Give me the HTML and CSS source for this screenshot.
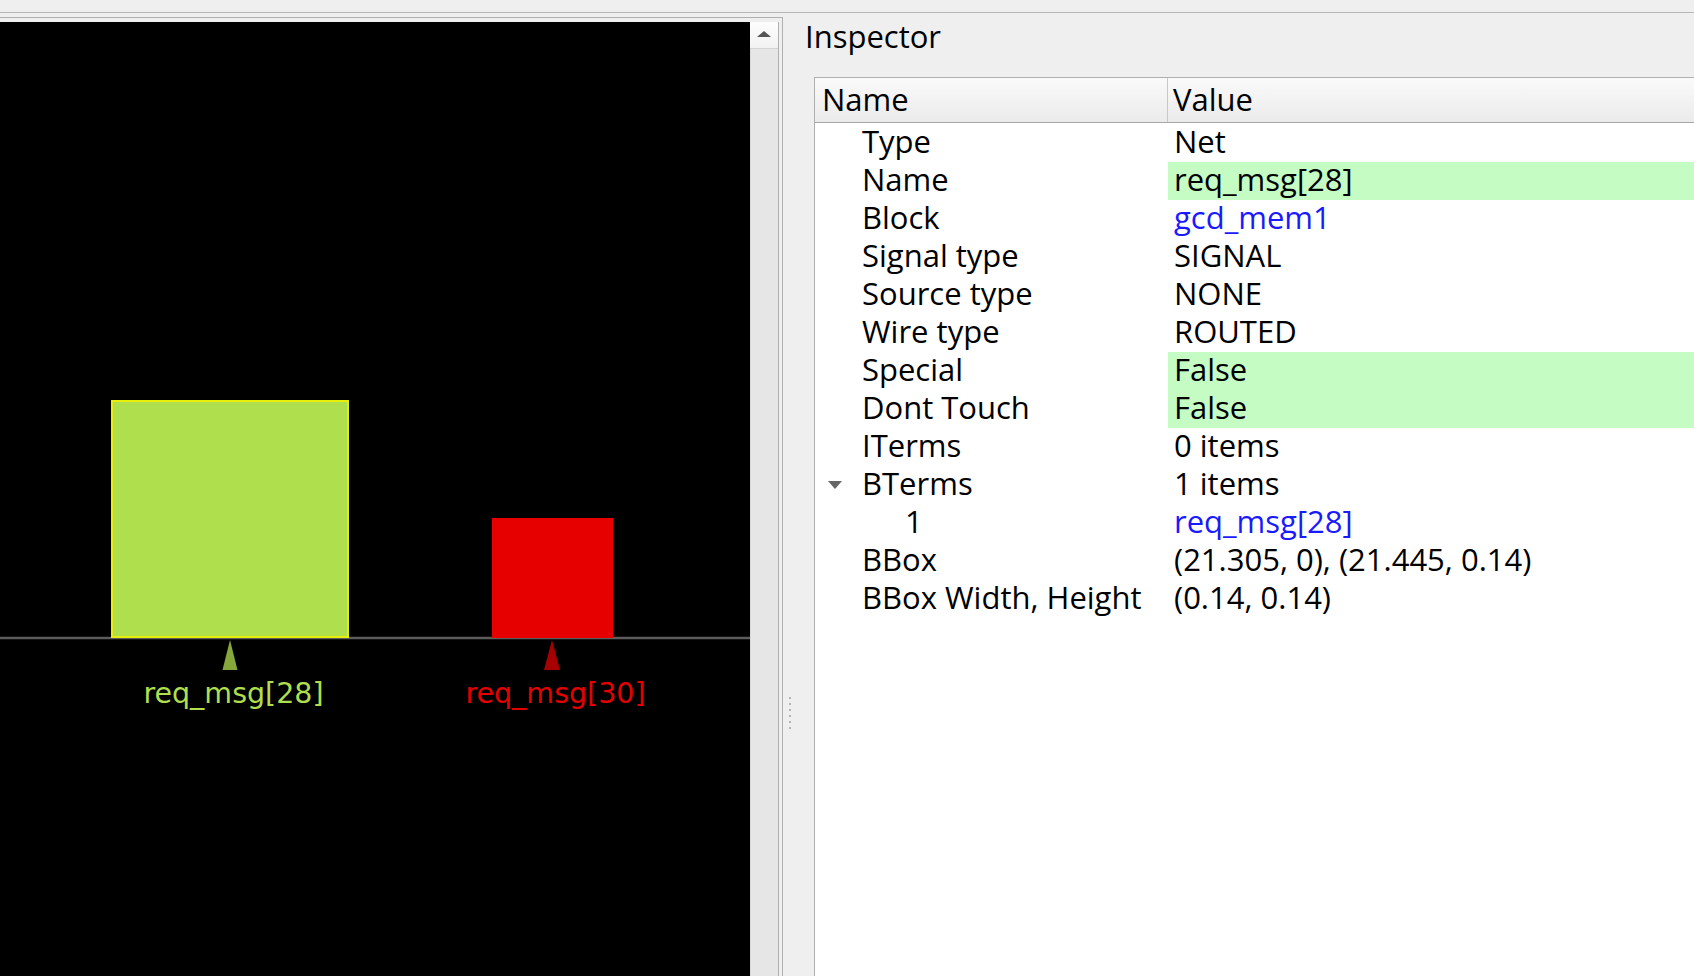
FILE: index.html
```html
<!DOCTYPE html>
<html>
<head>
<meta charset="utf-8">
<title>Inspector</title>
<link rel="stylesheet" href="styles.css">
</head>
<body>
<div class="app">
  <div class="topbar"></div>
  <div class="main">
    <div class="left-dock">
      <div class="view">
        <div class="canvas">
          <svg class="layout" width="750" height="954" viewBox="0 22 750 954" xmlns="http://www.w3.org/2000/svg">
            <line x1="0" y1="638" x2="750" y2="638" stroke="#5c5c5c" stroke-width="2.5"/>
            <rect x="112" y="401" width="236" height="236" fill="#b0df4e" stroke="#e6ef0a" stroke-width="2"/>
            <rect x="492" y="518" width="121" height="120" fill="#e60000"/>
            <polygon points="230,640 237.5,670 222.5,670" fill="#86a73a"/>
            <polygon points="552,640 560,670 544,670" fill="#a80000"/>
            <text class="pin-label" x="233.5" y="703" text-anchor="middle" fill="#b0df4e">req_msg[28]</text>
            <text class="pin-label" x="555.5" y="703" text-anchor="middle" fill="#e60000">req_msg[30]</text>
          </svg>
        </div>
        <div class="vscroll">
          <div class="vscroll-btn"><span class="up-arrow"></span></div>
          <div class="vscroll-track"></div>
        </div>
      </div>
    </div>
    <div class="splitter">
      <span class="dot"></span><span class="dot"></span><span class="dot"></span>
      <span class="dot"></span><span class="dot"></span><span class="dot"></span>
    </div>
    <div class="inspector">
      <div class="title">Inspector</div>
      <div class="table">
        <div class="thead">
          <div class="th">Name</div>
          <div class="th th-value">Value</div>
        </div>
        <div class="tbody">
          <div class="row"><div class="name"><span class="indent"></span>Type</div><div class="value">Net</div></div>
          <div class="row"><div class="name"><span class="indent"></span>Name</div><div class="value edit">req_msg[28]</div></div>
          <div class="row"><div class="name"><span class="indent"></span>Block</div><div class="value link">gcd_mem1</div></div>
          <div class="row"><div class="name"><span class="indent"></span>Signal type</div><div class="value">SIGNAL</div></div>
          <div class="row"><div class="name"><span class="indent"></span>Source type</div><div class="value">NONE</div></div>
          <div class="row"><div class="name"><span class="indent"></span>Wire type</div><div class="value">ROUTED</div></div>
          <div class="row"><div class="name"><span class="indent"></span>Special</div><div class="value edit">False</div></div>
          <div class="row"><div class="name"><span class="indent"></span>Dont Touch</div><div class="value edit">False</div></div>
          <div class="row"><div class="name"><span class="indent"></span>ITerms</div><div class="value">0 items</div></div>
          <div class="row"><div class="name"><span class="indent"><span class="twisty"></span></span>BTerms</div><div class="value">1 items</div></div>
          <div class="row"><div class="name"><span class="indent child"></span>1</div><div class="value link">req_msg[28]</div></div>
          <div class="row"><div class="name"><span class="indent"></span>BBox</div><div class="value">(21.305, 0), (21.445, 0.14)</div></div>
          <div class="row"><div class="name"><span class="indent"></span>BBox Width, Height</div><div class="value">(0.14, 0.14)</div></div>
        </div>
      </div>
    </div>
  </div>
</div>
</body>
</html>
```
FILE: styles.css
```css
html, body {
  margin: 0;
  padding: 0;
  height: 976px;
  overflow: hidden;
  background: #efefef;
  font-family: "Open Sans", "Noto Sans", Lato, sans-serif;
  color: #000;
}

.app {
  display: flex;
  flex-direction: column;
  height: 976px;
}

.topbar {
  flex: none;
  height: 12px;
  border-bottom: 1px solid #b6b6b6;
}

.main {
  flex: 1;
  display: flex;
  padding-top: 4px;
  min-height: 0;
}

.left-dock {
  flex: none;
  width: 783px;
  box-sizing: border-box;
  border-top: 1px solid #b0b0b0;
  border-right: 1px solid #b0b0b0;
  padding: 4px 3px 0 0;
  display: flex;
}

.view {
  display: flex;
  border-right: 1px solid #b0b0b0;
}

.canvas {
  width: 750px;
  background: #000;
  overflow: hidden;
}

.layout {
  display: block;
}

.pin-label {
  font-family: "DejaVu Sans", sans-serif;
  font-size: 28.5px;
}

.vscroll {
  width: 28px;
  display: flex;
  flex-direction: column;
  background: #e6e6e6;
}

.vscroll-btn {
  height: 26px;
  flex: none;
  background: linear-gradient(#fdfdfd, #f2f2f2);
  border-bottom: 1px solid #d4d4d4;
  display: flex;
  align-items: center;
  justify-content: center;
}

.up-arrow {
  width: 0;
  height: 0;
  border-left: 7px solid transparent;
  border-right: 7px solid transparent;
  border-bottom: 6px solid #555;
  margin-top: -2px;
}

.vscroll-track {
  flex: 1;
  border-left: 1px solid #d8d8d8;
}

.splitter {
  flex: none;
  width: 14px;
  padding-top: 680px;
  display: flex;
  flex-direction: column;
  align-items: center;
  gap: 4px;
}

.dot {
  width: 2px;
  height: 2px;
  background: #b4b4b4;
}

.inspector {
  flex: 1;
  display: flex;
  flex-direction: column;
  padding-left: 8px;
  min-width: 0;
}

.title {
  flex: none;
  height: 60px;
  box-sizing: border-box;
  padding-top: 2px;
  font-size: 31px;
  line-height: 34px;
}

.table {
  flex: 1;
  margin-left: 9px;
  background: #fff;
  border-top: 1px solid #b0b0b0;
  border-left: 1px solid #b0b0b0;
}

.thead {
  display: grid;
  grid-template-columns: 352px 1fr;
  height: 44px;
  background: linear-gradient(#fafafa, #ebebeb);
  border-bottom: 1px solid #a8a8a8;
  font-size: 31px;
  line-height: 42px;
}

.th {
  padding-left: 7px;
}

.th-value {
  border-left: 1px solid #c8c8c8;
  padding-left: 5px;
}

.tbody {
  padding-top: 1px;
  font-size: 31px;
}

.row {
  display: grid;
  grid-template-columns: 353px 1fr;
  height: 38px;
  line-height: 34px;
}

.name {
  display: flex;
  align-items: flex-start;
  white-space: nowrap;
}

.indent {
  flex: none;
  width: 47px;
  height: 38px;
  display: flex;
  align-items: center;
  box-sizing: border-box;
  padding-left: 13px;
}

.indent.child {
  width: 90px;
}

.twisty {
  width: 0;
  height: 0;
  border-left: 7px solid transparent;
  border-right: 7px solid transparent;
  border-top: 8px solid #666;
  margin-top: -1px;
}

.value {
  padding-left: 6px;
  white-space: nowrap;
}

.value.edit {
  background: #c4fcc4;
}

.value.link {
  color: #1a1aff;
}
```
